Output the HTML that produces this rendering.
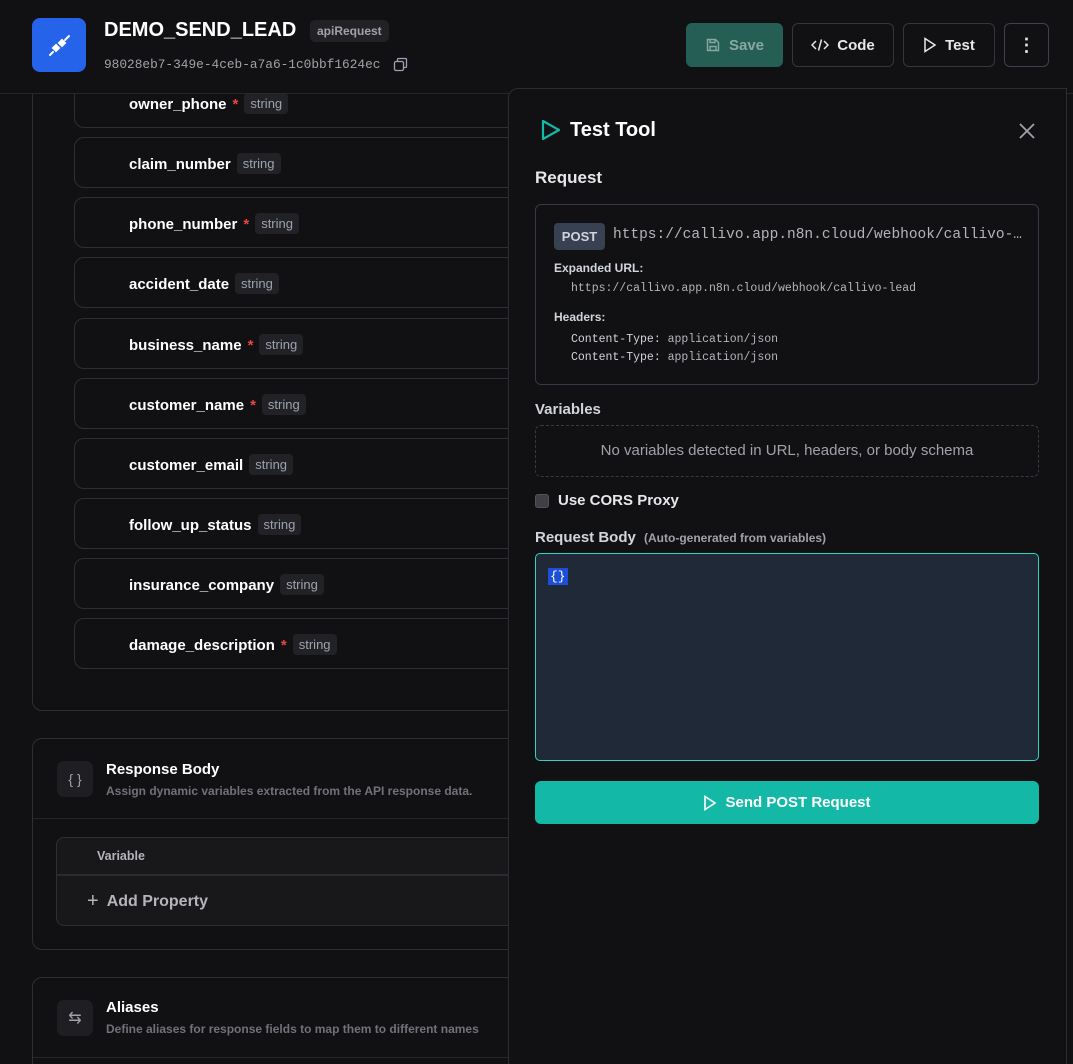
<!DOCTYPE html>
<html><head><meta charset="utf-8"><style>
*{box-sizing:border-box;margin:0;padding:0}
html,body{width:1073px;height:1064px;overflow:hidden}
body{background:#111114;font-family:"Liberation Sans",sans-serif;color:#fff;position:relative}
.a{position:absolute}
.mono{font-family:"Liberation Mono",monospace}
.row{position:absolute;left:74px;width:460px;height:51px;border:1px solid #2e2f33;border-radius:10px}
.row .n{position:absolute;left:54px;top:15px;font-size:15px;font-weight:bold;color:#fff;white-space:nowrap}
.star{color:#ef4444;margin-left:6px}
.tag{display:inline-block;background:#222226;color:#9ca3af;font-weight:normal;font-size:13px;padding:3px 6px;border-radius:4px;margin-left:6px;vertical-align:1px}
.btn{position:absolute;top:23px;height:44px;border:1px solid #34363c;border-radius:6px;font-size:15px;font-weight:bold;display:flex;align-items:center;justify-content:center;gap:8px;color:#e5e7eb}
.ic{position:absolute;width:36px;height:36px;background:#1f1f23;border-radius:7px;display:flex;align-items:center;justify-content:center;color:#a1a1aa}
.hdr{position:absolute;left:0;top:0;width:1073px;height:94px;background:#111114;border-bottom:1px solid #26272b;z-index:5}
</style></head><body>

<div class="a" style="left:32px;top:40px;width:520px;height:671px;border:1px solid #2e2f33;border-radius:10px"></div>
<div class="row" style="top:77px"><div class="n">owner_phone<span class="star">*</span><span class="tag">string</span></div></div>
<div class="row" style="top:137px"><div class="n">claim_number<span class="tag">string</span></div></div>
<div class="row" style="top:197px"><div class="n">phone_number<span class="star">*</span><span class="tag">string</span></div></div>
<div class="row" style="top:257px"><div class="n">accident_date<span class="tag">string</span></div></div>
<div class="row" style="top:318px"><div class="n">business_name<span class="star">*</span><span class="tag">string</span></div></div>
<div class="row" style="top:378px"><div class="n">customer_name<span class="star">*</span><span class="tag">string</span></div></div>
<div class="row" style="top:438px"><div class="n">customer_email<span class="tag">string</span></div></div>
<div class="row" style="top:498px"><div class="n">follow_up_status<span class="tag">string</span></div></div>
<div class="row" style="top:558px"><div class="n">insurance_company<span class="tag">string</span></div></div>
<div class="row" style="top:618px"><div class="n">damage_description<span class="star">*</span><span class="tag">string</span></div></div>

<div class="hdr">
<div class="a" style="left:32px;top:18px;width:54px;height:54px;background:#2563eb;border-radius:8px">
<svg width="54" height="54" viewBox="0 0 54 54"><g fill="#fff" stroke="#fff" stroke-width="2" stroke-linecap="round"><path d="M21 34l-3 3M33 22l4-4"/><path d="M24 27l3 3-3 3-3-3z"/><path d="M30 22l3 3-3 3-3-3z"/></g></svg></div>
<div class="a" style="left:104px;top:19px;font-size:20px;font-weight:bold;white-space:nowrap">DEMO_SEND_LEAD</div>
<div class="a" style="left:310px;top:20px;background:#222226;color:#a1a1aa;font-size:12px;font-weight:bold;padding:4px 7px;border-radius:5px">apiRequest</div>
<div class="a mono" style="left:104px;top:57px;font-size:12.8px;color:#a1a1aa;white-space:nowrap">98028eb7-349e-4ceb-a7a6-1c0bbf1624ec</div>
<svg class="a" style="left:393px;top:57px" width="15" height="15" viewBox="0 0 15 15" fill="none" stroke="#9ca3af" stroke-width="1.3"><rect x="1.5" y="4.5" width="9" height="9" rx="1.5"/><path d="M4.5 4.5V2.5a1 1 0 011-1h7a1 1 0 011 1v7a1 1 0 01-1 1h-2"/></svg>
<div class="btn" style="left:686px;width:97px;background:#245e55;border-color:#245e55;color:#8aa7a2"><svg width="16" height="16" viewBox="0 0 16 16" fill="none" stroke="#8aa7a2" stroke-width="1.4"><path d="M2.5 2.5h8l3 3v8h-11z"/><path d="M5 2.5v3h5v-3M5 13.5v-4h6v4"/></svg>Save</div>
<div class="btn" style="left:792px;width:102px"><svg width="18" height="14" viewBox="0 0 18 14" fill="none" stroke="#e5e7eb" stroke-width="1.5"><path d="M5 3L1 7l4 4M13 3l4 4-4 4M10.5 1.5l-3 11"/></svg>Code</div>
<div class="btn" style="left:903px;width:92px"><svg width="14" height="16" viewBox="0 0 14 16" fill="none" stroke="#e5e7eb" stroke-width="1.5"><path d="M2 1.5v13l10-6.5z"/></svg>Test</div>
<div class="btn" style="left:1004px;width:45px;border-color:#3b4250;font-size:18px">⋮</div>
</div>

<div class="a" style="left:32px;top:738px;width:520px;height:212px;border:1px solid #2e2f33;border-radius:10px"></div>
<div class="ic" style="left:57px;top:761px;font-size:14px">{ }</div>
<div class="a" style="left:106px;top:761px;font-size:15px;font-weight:bold">Response Body</div>
<div class="a" style="left:106px;top:784px;font-size:12px;font-weight:bold;color:#71717a;white-space:nowrap">Assign dynamic variables extracted from the API response data.</div>
<div class="a" style="left:33px;top:818px;width:490px;height:1px;background:#26272b"></div>
<div class="a" style="left:56px;top:837px;width:470px;height:89px;border:1px solid #2e2f33;border-radius:8px;background:#18181b"></div>
<div class="a" style="left:57px;top:874px;width:460px;height:2px;background:#2a2b30"></div>
<div class="a" style="left:97px;top:849px;font-size:12.5px;font-weight:bold;color:#b4b4bb">Variable</div>
<div class="a" style="left:87px;top:890px;font-size:16px;font-weight:bold;color:#b4b4bb"><span style="font-weight:normal;font-size:20px;margin-right:8px;vertical-align:-1px">+</span>Add Property</div>

<div class="a" style="left:32px;top:977px;width:520px;height:120px;border:1px solid #2e2f33;border-radius:10px"></div>
<div class="ic" style="left:57px;top:1000px;font-size:16px">⇆</div>
<div class="a" style="left:106px;top:999px;font-size:15px;font-weight:bold">Aliases</div>
<div class="a" style="left:106px;top:1022px;font-size:12px;font-weight:bold;color:#71717a;white-space:nowrap">Define aliases for response fields to map them to different names</div>
<div class="a" style="left:33px;top:1057px;width:490px;height:1px;background:#26272b"></div>

<div class="a" style="left:508px;top:88px;width:559px;height:1000px;background:#111114;border:1px solid #2a2d35;border-radius:10px 0 0 0;z-index:6"></div>
<div class="a" style="left:0;top:0;width:1073px;height:1064px;z-index:7">
<svg class="a" style="left:540px;top:119px" width="22" height="22" viewBox="0 0 22 22" fill="none" stroke="#14b8a6" stroke-width="2.2" stroke-linejoin="round"><path d="M3 2v18l16-9z"/></svg>
<div class="a" style="left:570px;top:119px;font-size:20px;font-weight:bold">Test Tool</div>
<svg class="a" style="left:1018px;top:122px" width="18" height="18" viewBox="0 0 18 18" stroke="#a1a1aa" stroke-width="1.8"><path d="M2 2l14 14M16 2L2 16"/></svg>
<div class="a" style="left:535px;top:168px;font-size:17px;font-weight:bold;color:#e5e7eb">Request</div>
<div class="a" style="left:535px;top:204px;width:504px;height:181px;border:1px solid #343a46;border-radius:6px"></div>
<div class="a" style="left:554px;top:223px;width:51px;height:27px;background:#374151;border-radius:4px;font-size:13px;font-weight:bold;color:#d1d5db;text-align:center;line-height:27px">POST</div>
<div class="a mono" style="left:613px;top:227px;font-size:14.5px;color:#b4b4bb;white-space:nowrap">https://callivo.app.n8n.cloud/webhook/callivo-…</div>
<div class="a" style="left:554px;top:261px;font-size:12px;font-weight:bold;color:#d1d5db">Expanded URL:</div>
<div class="a mono" style="left:571px;top:282px;font-size:11.5px;color:#b4b4bb">https://callivo.app.n8n.cloud/webhook/callivo-lead</div>
<div class="a" style="left:554px;top:310px;font-size:12px;font-weight:bold;color:#d1d5db">Headers:</div>
<div class="a mono" style="left:571px;top:331px;font-size:11.5px;color:#b4b4bb;line-height:18px"><span style="color:#d1d5db">Content-Type:</span> application/json<br><span style="color:#d1d5db">Content-Type:</span> application/json</div>
<div class="a" style="left:535px;top:401px;font-size:15px;font-weight:bold;color:#d1d5db">Variables</div>
<div class="a" style="left:535px;top:425px;width:504px;height:52px;border:1px dashed #343a46;border-radius:6px;text-align:center;line-height:50px;font-size:15px;color:#a1a1aa">No variables detected in URL, headers, or body schema</div>
<div class="a" style="left:535px;top:494px;width:14px;height:14px;background:#3f3f46;border:1px solid #52525b;border-radius:3px"></div>
<div class="a" style="left:558px;top:492px;font-size:15px;font-weight:bold;color:#e5e7eb">Use CORS Proxy</div>
<div class="a" style="left:535px;top:529px;font-size:15px;font-weight:bold;color:#d1d5db">Request Body <span style="font-size:12px;color:#a1a1aa;margin-left:4px">(Auto-generated from variables)</span></div>
<div class="a" style="left:535px;top:553px;width:504px;height:208px;background:#1f2937;border:1px solid #2dd4bf;border-radius:5px"></div>
<div class="a mono" style="left:548px;top:568px;background:#1d4ed8;color:#fff;font-size:13px;padding:1px 2px">{}</div>
<div class="a" style="left:535px;top:781px;width:504px;height:43px;background:#14b8a6;border-radius:6px;display:flex;align-items:center;justify-content:center;gap:8px;font-size:15px;font-weight:bold"><svg width="14" height="16" viewBox="0 0 14 16" fill="none" stroke="#fff" stroke-width="1.6"><path d="M2 1.5v13l10-6.5z"/></svg>Send POST Request</div>
</div>
</body></html>
